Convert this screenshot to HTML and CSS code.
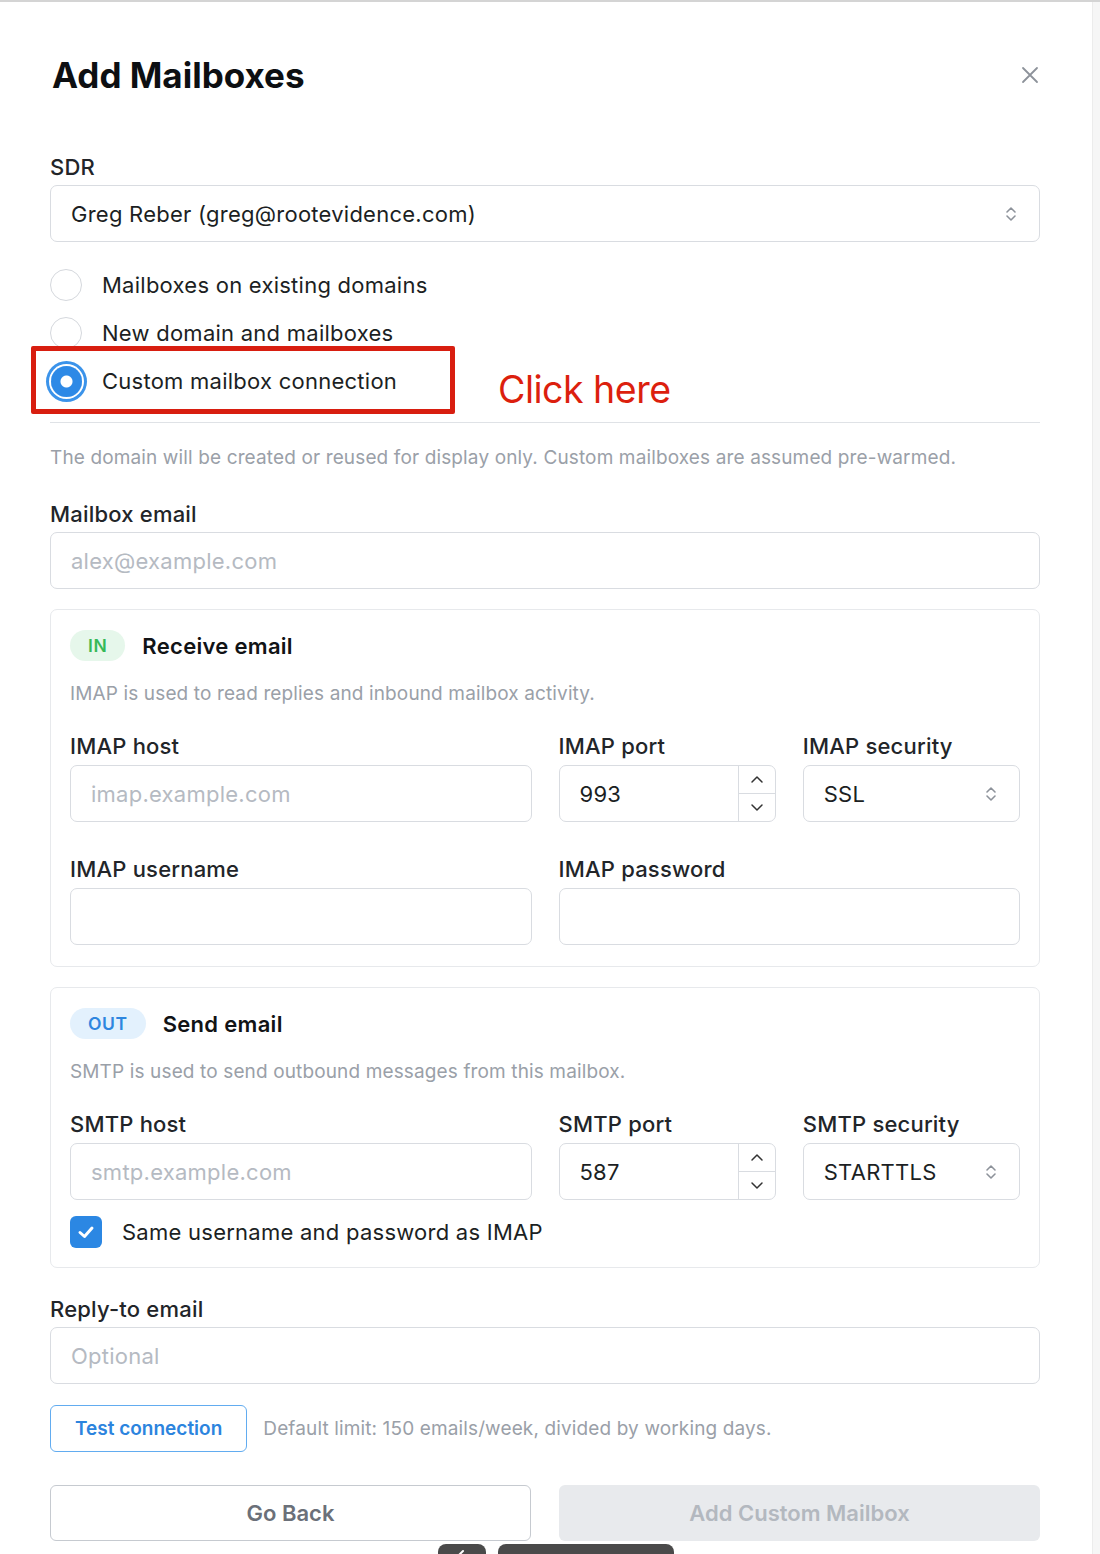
FILE: index.html
```html
<!DOCTYPE html>
<html lang="en">
<head>
  <meta charset="UTF-8" />
  <meta name="viewport" content="width=device-width, initial-scale=1.0" />
  <title>Add Mailboxes</title>
  <link rel="stylesheet" href="styles.css">
</head>
<body>
  <div class="frame">
    <div class="modal">
      <!-- Header -->
      <div class="modal-head">
        <h1>Add Mailboxes</h1>
        <button class="close" aria-label="Close">
          <svg width="18" height="18" viewBox="0 0 18 18"><path d="M2 2L16 16M16 2L2 16" stroke="#8d929a" stroke-width="1.8" stroke-linecap="round"/></svg>
        </button>
      </div>

      <!-- SDR -->
      <label class="field-label">SDR</label>
      <div class="select">
        <span>Greg Reber (greg@rootevidence.com)</span>
        <svg class="updown" width="14" height="20" viewBox="0 0 14 20"><path d="M3 8L7 4L11 8M3 12L7 16L11 12" fill="none" stroke="#8d929a" stroke-width="1.6" stroke-linecap="round" stroke-linejoin="round"/></svg>
      </div>

      <!-- Mode -->
      <div class="radios">
        <label class="radio-row"><span class="radio"></span>Mailboxes on existing domains</label>
        <label class="radio-row"><span class="radio"></span>New domain and mailboxes</label>
        <label class="radio-row picked">
          <span class="radio on"></span>Custom mailbox connection
          <span class="callout-box"></span>
          <span class="callout-text">Click here</span>
        </label>
      </div>

      <hr class="divider" />
      <p class="hint">The domain will be created or reused for display only. Custom mailboxes are assumed pre-warmed.</p>

      <!-- Mailbox email -->
      <label class="field-label">Mailbox email</label>
      <div class="input placeholder">alex@example.com</div>

      <!-- Receive -->
      <div class="card">
        <div class="card-head">
          <span class="badge in">IN</span>
          <span class="card-title">Receive email</span>
        </div>
        <p class="hint card-hint">IMAP is used to read replies and inbound mailbox activity.</p>
        <div class="grid2">
          <div>
            <label class="field-label">IMAP host</label>
            <div class="input placeholder">imap.example.com</div>
          </div>
          <div class="grid2">
            <div>
              <label class="field-label">IMAP port</label>
              <div class="input number">
                <span class="num-val">993</span>
                <span class="spin">
                  <span><svg width="14" height="9" viewBox="0 0 14 9"><path d="M2 7L7 2L12 7" fill="none" stroke="#333" stroke-width="1.5" stroke-linecap="round" stroke-linejoin="round"/></svg></span>
                  <span><svg width="14" height="9" viewBox="0 0 14 9"><path d="M2 2L7 7L12 2" fill="none" stroke="#333" stroke-width="1.5" stroke-linecap="round" stroke-linejoin="round"/></svg></span>
                </span>
              </div>
            </div>
            <div>
              <label class="field-label">IMAP security</label>
              <div class="select">
                <span>SSL</span>
                <svg class="updown" width="14" height="20" viewBox="0 0 14 20"><path d="M3 8L7 4L11 8M3 12L7 16L11 12" fill="none" stroke="#8d929a" stroke-width="1.6" stroke-linecap="round" stroke-linejoin="round"/></svg>
              </div>
            </div>
          </div>
        </div>
        <div class="grid2 row-gap">
          <div>
            <label class="field-label">IMAP username</label>
            <div class="input"></div>
          </div>
          <div>
            <label class="field-label">IMAP password</label>
            <div class="input"></div>
          </div>
        </div>
      </div>

      <!-- Send -->
      <div class="card send">
        <div class="card-head">
          <span class="badge out">OUT</span>
          <span class="card-title">Send email</span>
        </div>
        <p class="hint card-hint">SMTP is used to send outbound messages from this mailbox.</p>
        <div class="grid2">
          <div>
            <label class="field-label">SMTP host</label>
            <div class="input placeholder">smtp.example.com</div>
          </div>
          <div class="grid2">
            <div>
              <label class="field-label">SMTP port</label>
              <div class="input number">
                <span class="num-val">587</span>
                <span class="spin">
                  <span><svg width="14" height="9" viewBox="0 0 14 9"><path d="M2 7L7 2L12 7" fill="none" stroke="#333" stroke-width="1.5" stroke-linecap="round" stroke-linejoin="round"/></svg></span>
                  <span><svg width="14" height="9" viewBox="0 0 14 9"><path d="M2 2L7 7L12 2" fill="none" stroke="#333" stroke-width="1.5" stroke-linecap="round" stroke-linejoin="round"/></svg></span>
                </span>
              </div>
            </div>
            <div>
              <label class="field-label">SMTP security</label>
              <div class="select">
                <span>STARTTLS</span>
                <svg class="updown" width="14" height="20" viewBox="0 0 14 20"><path d="M3 8L7 4L11 8M3 12L7 16L11 12" fill="none" stroke="#8d929a" stroke-width="1.6" stroke-linecap="round" stroke-linejoin="round"/></svg>
              </div>
            </div>
          </div>
        </div>
        <label class="check-row">
          <span class="checkbox">
            <svg width="22" height="22" viewBox="0 0 22 22"><path d="M5 11.5L9.5 15.5L17 7" fill="none" stroke="#fff" stroke-width="3" stroke-linecap="round" stroke-linejoin="round"/></svg>
          </span>
          Same username and password as IMAP
        </label>
      </div>

      <!-- Reply-to -->
      <label class="field-label reply-label">Reply-to email</label>
      <div class="input placeholder">Optional</div>

      <div class="test-row">
        <button class="btn-test">Test connection</button>
        <span class="hint">Default limit: 150 emails/week, divided by working days.</span>
      </div>

      <div class="actions">
        <button class="btn-back">Go Back</button>
        <button class="btn-add" disabled>Add Custom Mailbox</button>
      </div>

      <!-- bottom toolbar peeking in -->
      <div class="dock">
        <span class="dock-a"><svg width="12" height="12" viewBox="0 0 12 12"><path d="M3 9L7 5" stroke="#fff" stroke-width="2" stroke-linecap="round"/></svg></span>
        <span class="dock-b"></span>
      </div>
    </div>
    <div class="scroll-track"></div>
  </div>
</body>
</html>
```

FILE: styles.css
```css
* {
  box-sizing: border-box;
}

body {
  margin: 0;
  background-color: #fff;
  font-family: Inter, "Noto Sans", sans-serif;
  color: #1c1f23;
  overflow: hidden;
}

.frame {
  display: flex;
  height: 1554px;
  border-top: 2px solid #d4d4d4;
}

.modal {
  position: relative;
  width: 1092px;
  padding: 52px 52px 0 50px;
}

.scroll-track {
  flex: 1;
  background-color: #f6f6f6;
  border-left: 1px solid #ececec;
}

/* header */
.modal-head {
  display: flex;
  justify-content: space-between;
  align-items: center;
  margin-bottom: 58px;
}

h1 {
  margin: 0 0 0 2px;
  font-size: 35px;
  line-height: 42px;
  font-weight: 700;
  color: #0d0f12;
}

.close {
  border: none;
  background: none;
  padding: 0;
  margin-right: 1px;
  display: flex;
  cursor: pointer;
}

/* fields */
.field-label {
  display: block;
  font-size: 22px;
  line-height: 26px;
  font-weight: 500;
  letter-spacing: 0.2px;
  color: #222529;
  margin-bottom: 5px;
}

.card .field-label {
  margin-bottom: 6px;
}

.input,
.select {
  height: 57px;
  border: 1px solid #d9dce1;
  border-radius: 7px;
  display: flex;
  align-items: center;
  padding: 0 20px;
  font-size: 22px;
  letter-spacing: 0.25px;
  color: #1c1f23;
  background: #fff;
}

.select {
  justify-content: space-between;
}

.select .updown {
  margin-right: 1px;
}

.placeholder {
  color: #b5bac2;
}

.number {
  padding-right: 0;
}

.num-val {
  flex: 1;
}

.spin {
  width: 37px;
  height: 100%;
  border-left: 1px solid #d9dce1;
  display: flex;
  flex-direction: column;
}

.spin span {
  flex: 1;
  display: flex;
  align-items: center;
  justify-content: center;
}

.spin span:first-child {
  border-bottom: 1px solid #d9dce1;
}

/* radio group */
.radios {
  margin-top: 19px;
}

.radio-row {
  position: relative;
  height: 48px;
  display: flex;
  align-items: center;
  gap: 20px;
  font-size: 22px;
  letter-spacing: 0.25px;
  color: #1c1f23;
}

.radio {
  width: 32px;
  height: 32px;
  border-radius: 50%;
  border: 1px solid #d5d8dd;
  background: #fff;
}

.radio.on {
  width: 31px;
  height: 31px;
  margin: 0 0.5px;
  border: none;
  background: radial-gradient(circle, #fff 0 5.5px, #2d89e6 6.5px);
  box-shadow: 0 0 0 2px #fff, 0 0 0 5px #3b93ea;
}

.callout-box {
  position: absolute;
  left: -19px;
  top: -11px;
  width: 424px;
  height: 68px;
  border: 5px solid #d81e10;
  border-radius: 2px;
}

.callout-text {
  position: absolute;
  left: 448px;
  top: 9px;
  font-size: 37.5px;
  line-height: 48px;
  color: #dc1f0e;
  letter-spacing: -0.5px;
}

.divider {
  border: none;
  border-top: 1px solid #dfe2e6;
  margin: 17px 0 0;
}

.hint {
  margin: 0;
  font-size: 19px;
  line-height: 24px;
  letter-spacing: 0.13px;
  color: #9aa0a8;
}

.divider + .hint {
  margin: 23px 0 31px;
}

/* cards */
.card {
  margin-top: 20px;
  border: 1px solid #e7e9ec;
  border-radius: 7px;
  padding: 20px 19px 21px 19px;
}

.card.send {
  padding-bottom: 19px;
}

.card-head {
  display: flex;
  align-items: center;
  gap: 17px;
}

.badge {
  height: 31px;
  display: inline-flex;
  align-items: center;
  padding: 0 18px;
  border-radius: 16px;
  font-size: 17.5px;
  font-weight: 600;
  letter-spacing: 0.6px;
}

.badge.in {
  background-color: #e6f7eb;
  color: #36b957;
}

.badge.out {
  background-color: #e3f1fd;
  color: #2e86df;
}

.card-title {
  font-size: 22px;
  font-weight: 600;
  letter-spacing: 0.3px;
  color: #111316;
}

.card-hint {
  margin: 21px 0 27px;
}

.grid2 {
  display: grid;
  grid-template-columns: 1fr 1fr;
  column-gap: 27px;
}

.row-gap {
  margin-top: 34px;
}

.check-row {
  margin-top: 16px;
  display: flex;
  align-items: center;
  gap: 20px;
  font-size: 22px;
  letter-spacing: 0.25px;
  color: #1c1f23;
}

.checkbox {
  width: 32px;
  height: 32px;
  border-radius: 6px;
  background-color: #2b87e3;
  display: flex;
  align-items: center;
  justify-content: center;
}

.reply-label {
  margin-top: 28px;
}

/* buttons */
.test-row {
  margin-top: 21px;
  display: flex;
  align-items: center;
  gap: 16px;
}

.btn-test {
  height: 47px;
  padding: 0 24px;
  border: 1.5px solid #62acf0;
  border-radius: 6px;
  background: #fff;
  color: #2c84de;
  font-family: inherit;
  font-size: 19px;
  font-weight: 600;
}

.actions {
  margin-top: 33px;
  display: grid;
  grid-template-columns: 1fr 1fr;
  column-gap: 28px;
}

.btn-back,
.btn-add {
  height: 56px;
  border-radius: 6px;
  font-family: inherit;
  font-size: 22px;
  font-weight: 600;
}

.btn-back {
  border: 1px solid #c6cad0;
  background: #fff;
  color: #6b7079;
}

.btn-add {
  border: none;
  background-color: #e8eaed;
  color: #b3b8bf;
}

.dock {
  position: absolute;
  left: 438px;
  top: 1542px;
  display: flex;
  gap: 12px;
}

.dock-a,
.dock-b {
  height: 20px;
  background-color: #4a4a4a;
  border-radius: 8px 8px 0 0;
}

.dock-a {
  width: 48px;
  display: flex;
  justify-content: center;
  padding-top: 2px;
}

.dock-b {
  width: 176px;
}
```
